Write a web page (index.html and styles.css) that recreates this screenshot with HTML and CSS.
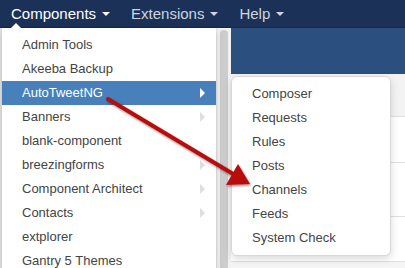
FILE: index.html
```html
<!DOCTYPE html>
<html lang="en">
<head>
  <meta charset="UTF-8" />
  <title>Components menu</title>
  <link rel="stylesheet" href="styles.css">
</head>
<body>
  <nav class="navbar">
    <a class="nav-item active">Components <span class="caret"></span></a>
    <a class="nav-item">Extensions <span class="caret"></span></a>
    <a class="nav-item">Help <span class="caret"></span></a>
  </nav>

  <div class="page">
    <div class="side">
      <div class="line"></div>
      <div class="line"></div>
    </div>
    <div class="scroll"><div class="thumb"></div></div>
    <div class="main">
      <div class="band"></div>
      <div class="rows">
        <div class="row r1"></div>
        <div class="row r2"></div>
        <div class="row r3"></div>
        <div class="row r4"></div>
      </div>
    </div>
  </div>

  <ul class="dropdown">
    <li>Admin Tools</li>
    <li>Akeeba Backup</li>
    <li class="sub hover">AutoTweetNG</li>
    <li class="sub">Banners</li>
    <li>blank-component</li>
    <li class="sub">breezingforms</li>
    <li class="sub">Component Architect</li>
    <li class="sub">Contacts</li>
    <li>extplorer</li>
    <li>Gantry 5 Themes</li>
  </ul>

  <ul class="submenu">
    <li>Composer</li>
    <li>Requests</li>
    <li>Rules</li>
    <li>Posts</li>
    <li>Channels</li>
    <li>Feeds</li>
    <li>System Check</li>
  </ul>

  <svg class="pointer" width="405" height="268" viewBox="0 0 405 268">
    <defs>
      <filter id="sh" x="-20%" y="-20%" width="140%" height="140%">
        <feDropShadow dx="1" dy="1.5" stdDeviation="1.2" flood-color="#000" flood-opacity="0.45"/>
      </filter>
    </defs>
    <g filter="url(#sh)">
      <line x1="108" y1="99" x2="234" y2="174.5" stroke="#b8100f" stroke-width="4" stroke-linecap="round"/>
      <polygon points="250,184 226,185 238,164" fill="#b8100f"/>
    </g>
  </svg>
</body>
</html>
```
FILE: styles.css
```css
body {
  margin: 0;
  font-family: "Liberation Sans", Arial, sans-serif;
  background: #fff;
  width: 405px;
  height: 268px;
  overflow: hidden;
  position: relative;
}
.navbar {
  height: 27px;
  background: #1b3157;
  border-bottom: 1px solid #16294a;
  display: flex;
  align-items: center;
  padding-left: 11px;
  gap: 21px;
}
.nav-item {
  font-size: 15px;
  color: #cfd5df;
  display: flex;
  align-items: center;
  gap: 6px;
}
.nav-item.active {
  color: #fff;
}
.caret {
  width: 0;
  height: 0;
  border-left: 4px solid transparent;
  border-right: 4px solid transparent;
  border-top: 4px solid currentColor;
}
.page {
  display: flex;
  height: 240px;
}
.side {
  width: 216px;
  border-left: 2px solid #e4e4e4;
  box-sizing: border-box;
  padding-top: 150px;
  display: flex;
  flex-direction: column;
  gap: 71px;
}
.side .line {
  height: 1px;
  background: #e2e2e2;
}
.scroll {
  width: 15px;
  background: #f2f2f2;
  border-left: 1px solid #e6e6e6;
  box-sizing: border-box;
  padding: 2px 3px 0 3px;
}
.thumb {
  height: 240px;
  background: #cdcdcd;
  border-radius: 4px;
}
.main {
  flex: 1;
  background: #f5f5f5;
}
.band {
  height: 46px;
  background: #2b5080;
}
.rows {
  display: flex;
  flex-direction: column;
}
.row {
  border-bottom: 1px solid #e0e0e0;
  background: #fff;
}
.r1 { height: 42px; background: #f3f3f3; }
.r2 { height: 45px; }
.r3 { height: 53px; }
.r4 { height: 44px; }

.dropdown,
.submenu {
  position: absolute;
  list-style: none;
  margin: 0;
  background: #fff;
  font-size: 13px;
  color: #444;
}
.dropdown {
  left: 2px;
  top: 28px;
  width: 214px;
  padding: 5px 0 0 0;
  box-shadow: 0 3px 8px rgba(0,0,0,0.18);
}
.dropdown::before {
  content: "";
  position: absolute;
  left: 8px;
  top: -5px;
  border-left: 6px solid transparent;
  border-right: 6px solid transparent;
  border-bottom: 6px solid #fff;
}
.dropdown li,
.submenu li {
  height: 24px;
  line-height: 24px;
  padding-left: 20px;
  position: relative;
}
.dropdown li.hover {
  background: #4780bb;
  color: #fff;
}
.dropdown li.sub::after {
  content: "";
  position: absolute;
  right: 11px;
  top: 7px;
  border-top: 5px solid transparent;
  border-bottom: 5px solid transparent;
  border-left: 5px solid #dedede;
}
.dropdown li.hover::after {
  border-left-color: #fff;
}
.submenu {
  left: 231px;
  top: 76px;
  width: 160px;
  box-sizing: border-box;
  padding: 5px 0;
  border: 1px solid #d8d8d8;
  border-radius: 6px;
  box-shadow: 0 3px 8px rgba(0,0,0,0.15);
}
.pointer {
  position: absolute;
  left: 0;
  top: 0;
  pointer-events: none;
}
```
